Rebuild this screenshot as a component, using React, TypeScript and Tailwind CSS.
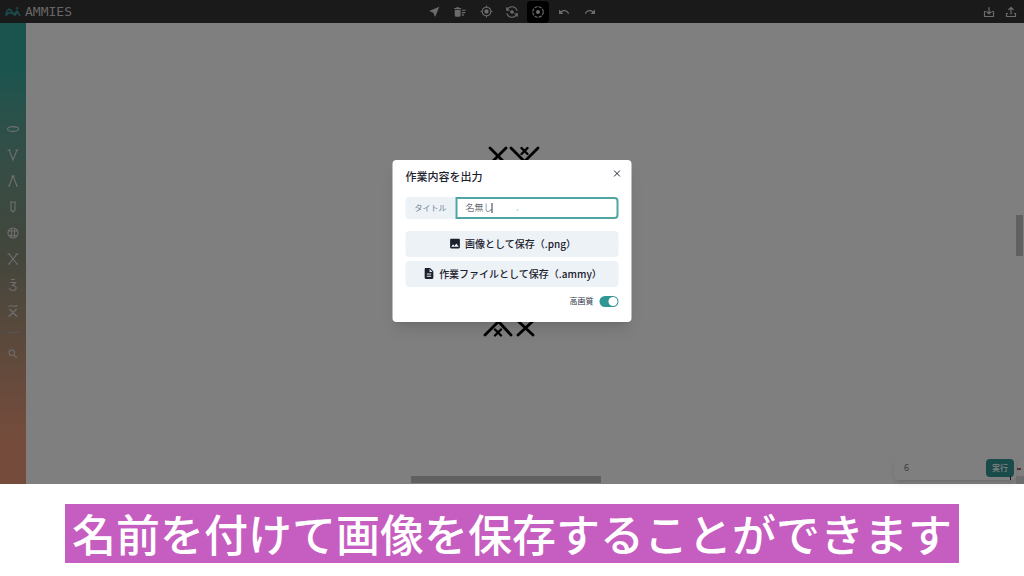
import { useState, type ReactNode } from "react";
import { MdNearMe, MdDeleteSweep, MdMyLocation, MdFlipCameraAndroid, MdUndo, MdRedo, MdImage, MdDescription, MdSearch } from "react-icons/md";

function Logo() {
  return (
    <svg viewBox="0 0 16 10" className="h-[10px] w-4" fill="none" stroke="#319795" strokeWidth="1.6" strokeLinecap="round" strokeLinejoin="round">
      <path d="M1 8C1 4 4 1 5.5 3L9 7.5Q10 9 11 7L12.2 4.2L14.8 8.5M1.5 8Q4 4.5 6.5 6.5M9 7.5 11.8 4" />
      <circle cx="12.2" cy="1.3" r=".4" />
    </svg>
  );
}

function FocusRing() {
  return (
    <svg viewBox="0 0 24 24" className="size-3.5" fill="none" stroke="currentColor" strokeWidth="2">
      <circle cx="12" cy="12" r="9" strokeDasharray="5.4 1.67" />
      <circle cx="12" cy="12" r="3.4" fill="currentColor" stroke="none" />
    </svg>
  );
}

function Tray({ up = false }: { up?: boolean }) {
  return (
    <svg viewBox="0 0 12 12" className="size-3" fill="none" stroke="currentColor" strokeWidth="1.2" strokeLinecap="round" strokeLinejoin="round">
      <path d={up ? "M2.5 7.5H1.5v3h9v-3h-1M6 8V1.5M3.8 3.5 6 1.5l2.2 2" : "M2.5 5.5h-1v5h9v-5h-1M6 1.5v6.3M3.8 5.8 6 7.8l2.2-2"} />
    </svg>
  );
}

const tools: { label: string; icon: ReactNode; active?: boolean }[] = [
  { label: "選択", icon: <MdNearMe size={13} /> },
  { label: "消去", icon: <MdDeleteSweep size={14} /> },
  { label: "中心", icon: <MdMyLocation size={13} /> },
  { label: "反転", icon: <MdFlipCameraAndroid size={14} /> },
  { label: "フォーカス", icon: <FocusRing />, active: true },
  { label: "元に戻す", icon: <MdUndo size={12} /> },
  { label: "やり直す", icon: <MdRedo size={12} /> },
];

const stitches: { label: string; path: string }[] = [
  { label: "鎖編み", path: "M1.5 7a5.5 2.4 0 1 0 11 0a5.5 2.4 0 1 0-11 0" },
  { label: "増し目", path: "M1.5 2h3M9.5 2h3M3 2l4 10L11 2" },
  { label: "減らし目", path: "M5 2h4M7 2 3 12M7 2l4 10M2 12h2M10 12h2" },
  { label: "中長編み", path: "M4 2h6M5 2v8l2 2 2-2V2" },
  { label: "玉編み", path: "M2 7a5 5 0 1 0 10 0a5 5 0 1 0-10 0M2.5 5h9M2.5 9.5h9M5.5 2.5v9M8.5 2.5v9" },
  { label: "交差編み", path: "M1.5 2h3M9.5 2h3M3 2l8 10M11 2 3 12M2 12h2M10 12h2" },
  { label: "引き上げ編み", path: "M5 1.5h4M4.5 4.5h5L6.5 7.5C11 7 11.5 12.5 7 12.5C5 12.5 3.5 11.5 3.5 10" },
  { label: "バック細編み", path: "M2.5 2.5C5 0 8 4 11.5 1.5M3.5 5l7 7M10.5 5l-7 7M2 12h2.5M9.5 12h2.5" },
];

function Pattern() {
  return (
    <svg viewBox="0 0 60 196" className="h-[196px] w-[60px]" fill="none" stroke="#000" strokeWidth="2.8" strokeLinecap="round">
      <path d="M8 3 24 19M24 3 8 19M29 3 45 19M56 3 40 19M3 190 17 176M16 176l13 14M36 176l15 14M51 176 36 190" />
      <path strokeWidth="2.4" d="m39.5 3 6 6M45.5 3l-6 6M13 184.5l6 6M19 184.5l-6 6" />
    </svg>
  );
}

function ExportDialog() {
  const [title, setTitle] = useState("名無し");
  return (
    <section role="dialog" aria-modal="true" aria-labelledby="export-title" className="absolute top-40 left-1/2 w-[239px] -translate-x-1/2 rounded bg-white px-[13px] pt-[7px] pb-[15px] text-[#1a202c] shadow-lg">
      <header className="flex items-start justify-between">
        <h1 id="export-title" className="text-[11px] leading-[18px] font-medium">作業内容を出力</h1>
        <button aria-label="閉じる" className="-mr-1 flex size-3 items-center justify-center">
          <svg viewBox="0 0 8 8" className="size-[7px]" stroke="currentColor" strokeWidth="1.1"><path d="m.5.5 7 7m0-7-7 7" /></svg>
        </button>
      </header>
      <div className="relative mt-3 flex h-[22px]">
        <label htmlFor="work-title" className="flex items-center rounded-l bg-[#edf2f7] px-[9px] text-[8px] text-[#718096]">タイトル</label>
        <input id="work-title" value={title} onChange={(e) => setTitle(e.target.value)} className="min-w-0 flex-1 rounded-r border-2 border-[#4fa5a3] px-2 text-[9px] font-light text-[#2d3748] outline-none" />
        <span className="absolute top-1.5 left-[86px] h-2.5 w-px bg-[#2d3748]" />
        <span className="absolute top-3 left-[111px] size-0.5 rounded-full bg-[#b5e3e8]" />
      </div>
      <div className="mt-3 flex flex-col gap-1">
        <button className="flex h-[26px] items-center justify-center gap-1 rounded-sm bg-[#edf2f7] pb-px text-[10px] font-medium"><MdImage size={13} />画像として保存（.png）</button>
        <button className="flex h-[26px] items-center justify-center gap-1 rounded-sm bg-[#edf2f7] pb-px text-[10px] font-medium"><MdDescription size={13} />作業ファイルとして保存（.ammy）</button>
      </div>
      <label className="mt-2 flex h-3 items-center justify-end gap-1.5 text-[8px] text-[#2d3748]">
        高画質
        <input type="checkbox" defaultChecked className="peer sr-only" />
        <span className="flex h-[11px] w-[19px] justify-start rounded-full bg-gray-300 p-px peer-checked:justify-end peer-checked:bg-[#319795]">
          <span className="size-[9px] rounded-full bg-white" />
        </span>
      </label>
    </section>
  );
}

export default function App() {
  return (
    <div className="relative flex min-h-screen flex-col overflow-hidden bg-white font-['Noto_Sans_CJK_JP',sans-serif]">
      <div className="relative flex flex-1 flex-col">
        <header className="grid h-[23px] grid-cols-[1fr_auto_1fr] items-center bg-[#343434] text-[#d8d8d8]">
          <a href="#" className="flex items-center gap-1 pl-[5px] font-['DejaVu_Sans_Mono',monospace] text-[13px] text-[#cccccc]"><Logo />AMMIES</a>
          <nav className="flex gap-1">
            {tools.map((t) => (
              <button key={t.label} aria-label={t.label} className={t.active ? "flex size-[22px] items-center justify-center rounded-sm bg-black" : "flex size-[22px] items-center justify-center"}>{t.icon}</button>
            ))}
          </nav>
          <div className="flex justify-end gap-2.5 pr-[7px]">
            <button aria-label="保存"><Tray /></button>
            <button aria-label="読み込み"><Tray up /></button>
          </div>
        </header>
        <div className="flex flex-1">
          <aside className="flex w-[26px] flex-col items-center justify-center bg-linear-to-b from-[#36a89e] from-10% via-[#868c78] via-50% to-[#ea9878] to-90% pb-[25px] text-[#dddddd]">
            {stitches.map((s) => (
              <button key={s.label} aria-label={s.label} className="flex h-[26px] items-center">
                <svg viewBox="0 0 14 14" className="size-3.5" fill="none" stroke="currentColor" strokeWidth="1.1"><path d={s.path} /></svg>
              </button>
            ))}
            <hr className="my-2 w-3 border-[#aaaaaa]" />
            <button aria-label="検索" className="flex h-[26px] items-center"><MdSearch size={12} /></button>
          </aside>
          <main className="relative flex flex-1 flex-col">
            <div className="absolute top-[122px] left-[456px]"><Pattern /></div>
            <div className="absolute top-[192px] right-px h-[41px] w-[7px] bg-[#c1c1c1]" />
            <div className="absolute bottom-px left-[385px] h-[7px] w-[190px] bg-[#c1c1c1]" />
            <form className="absolute right-2 bottom-1 flex h-6 w-[122px] items-center rounded bg-white p-0.5 shadow-md">
              <input aria-label="回数" defaultValue="6" className="min-w-0 flex-1 px-2 text-[9px] text-[#777777]" />
              <button type="button" className="h-[18px] rounded-sm bg-[#319795] px-1.5 text-[8px] font-medium text-white">実行</button>
            </form>
            <span className="absolute right-[3px] bottom-3.5 h-0.5 w-1 bg-[#b06060]" />
            <span className="absolute right-[13px] bottom-1 h-1 w-px bg-[#333333]" />
            <span className="absolute right-0 bottom-0 h-2 w-2 bg-[#dddddd]" />
          </main>
        </div>
        <div className="absolute inset-0 bg-black/50" />
      </div>
      <ExportDialog />
      <footer className="flex h-[92px] justify-center bg-white pt-5 pb-[13px]">
        <p className="bg-[#c65dc0] px-[7px] text-[44px] leading-[59px] font-medium whitespace-nowrap text-white">名前を付けて画像を保存することができます</p>
      </footer>
    </div>
  );
}
